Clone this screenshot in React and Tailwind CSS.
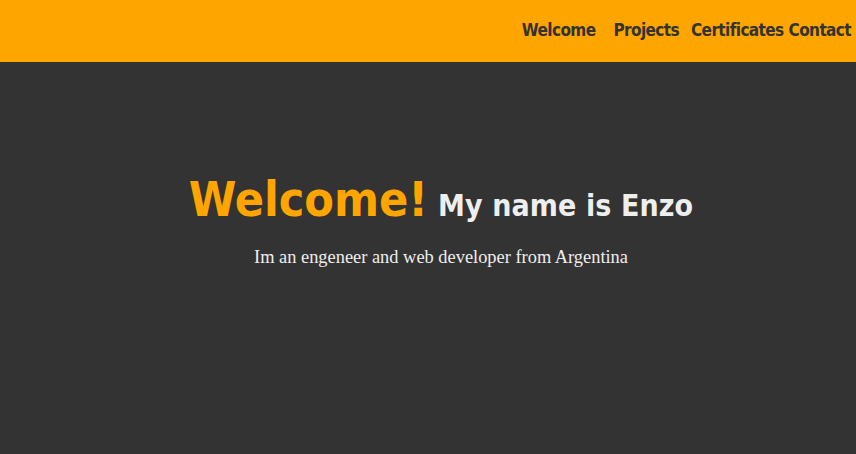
export default function App() {
  const nav = [
    { label: 'Welcome', cls: 'mr-[18px]' },
    { label: 'Projects', cls: 'mr-[12px]' },
    { label: 'Certificates', cls: 'mr-[5px]' },
    { label: 'Contact', cls: '' },
  ];

  return (
    <div className="min-h-[454px] w-full bg-[#333333]">
      {/* Barra de navegación */}
      <header className="flex h-[62px] items-center justify-end bg-[#ffa500] pr-[5px]">
        <nav className="flex items-center">
          {nav.map(item => (
            <a
              key={item.label}
              className={`font-['DejaVu_Sans_Condensed','DejaVu_Sans',sans-serif] text-[17px] font-bold tracking-[-0.6px] text-[#333333] [font-stretch:condensed] ${item.cls}`}
            >
              {item.label}
            </a>
          ))}
        </nav>
      </header>

      {/* Portada */}
      <section className="flex flex-col items-center pl-[26px] pt-[113px]">
        <h1 className="flex items-baseline font-['DejaVu_Sans_Condensed','DejaVu_Sans',sans-serif] font-bold [font-stretch:condensed]">
          <span className="text-[48px] leading-none tracking-[0px] text-[#ffa500]">Welcome!</span>
          <span className="ml-[10px] text-[30px] leading-none tracking-[0.1px] text-[#eeeeee]">My name is Enzo</span>
        </h1>
        <p className="mt-[21px] font-['Liberation_Serif',serif] text-[18.4px] text-[#eeeeee]">
          Im an engeneer and web developer from Argentina
        </p>
      </section>
    </div>
  );
}
